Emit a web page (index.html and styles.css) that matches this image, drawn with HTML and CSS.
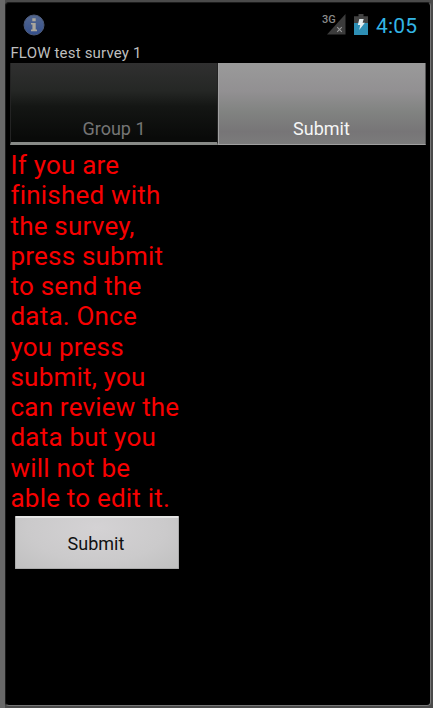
FILE: index.html
```
<!DOCTYPE html>
<html lang="en">
<head>
<meta charset="utf-8">
<title>FLOW test survey 1</title>
<link rel="stylesheet" href="styles.css">
</head>
<body>
<main class="screen">
  <header class="status">
    <svg class="info" width="22" height="22" viewBox="0 0 22 22">
      <defs><linearGradient id="blue" x1="0" y1="0" x2="0" y2="1"><stop offset="0" stop-color="#53678f"/><stop offset="1" stop-color="#344f8c"/></linearGradient></defs>
      <circle cx="11" cy="11" r="10" fill="url(#blue)" stroke="#4c5a78" stroke-width="1"/>
      <path d="M9.3 4.3h3.4v3H9.3zM8 9h4.700v6.600H14v1.600H8v-1.600h1.400v-5H8z" fill="#aaa69c"/>
    </svg>
    <div class="indicators">
      <span class="network">3G</span>
      <svg class="signal" width="19" height="21" viewBox="0 0 19 21">
        <path d="M18.500 0v20.500H0z" fill="#3c3c3c"/>
        <path d="M10.200 13.200l4.600 4.600M14.800 13.200l-4.600 4.600" stroke="#9a9a9a" stroke-width="1.1"/>
      </svg>
      <svg class="battery" width="14" height="21" viewBox="0 0 14 21">
        <path d="M4.500 0h5v2.300H14V10H0V2.300h4.500z" fill="#424242"/>
        <path d="M0 9h14v12H0z" fill="#2e8fb5"/>
        <path d="M5.300 5h4.400L8.600 8.800h2.300L5.200 16l1-5H3.800z" fill="#e4eef1"/>
      </svg>
      <time class="clock">4:05</time>
    </div>
  </header>
  <h1 class="title">FLOW test survey 1</h1>
  <nav class="tabs">
    <div class="tab tab-idle">Group 1</div>
    <div class="tab tab-active">Submit</div>
  </nav>
  <section class="content">
    <p class="message">If you are<br>finished with<br>the survey,<br>press submit<br>to send the<br>data. Once<br>you press<br>submit, you<br>can review the<br>data but you<br>will not be<br>able to edit it.</p>
    <button class="submit">Submit</button>
  </section>
</main>
</body>
</html>
```
FILE: styles.css
```
* { box-sizing: border-box; }
body {
  margin: 0;
  height: 708px;
  padding: 2px 2px 2px 5px;
  overflow: hidden;
  background: linear-gradient(90deg, #686868 0, #686868 5px, #4a4a4a 5px, #4a4a4a 100%);
  font-family: Roboto, sans-serif;
}
.screen {
  height: 704px;
  padding: 0 4px;
  background: #000;
  border: 1px solid #1c1c1c;
  border-right-color: #777;
  border-bottom-color: #777;
  border-radius: 4px;
}
.status {
  display: flex;
  justify-content: space-between;
  height: 40px;
  padding: 11px 8px 0 13px;
}
.indicators { display: flex; }
.network {
  width: 5px;
  margin-top: -1px;
  color: #8a8a8a;
  font: 500 11px/13px Roboto, sans-serif;
  white-space: nowrap;
}
.battery { margin-left: 8px; }
.clock {
  width: 42px;
  margin-left: 8px;
  color: #33b5e5;
  font-size: 21px;
  line-height: 24px;
  letter-spacing: .15px;
}
.title {
  height: 20px;
  margin: 0;
  padding-left: .4px;
  color: #bebebe;
  font-size: 15px;
  font-weight: 400;
  line-height: 20px;
  letter-spacing: .18px;
}
.tabs { display: flex; height: 82px; }
.tab {
  width: 208px;
  padding-top: 54px;
  font-size: 18px;
  line-height: 24px;
  text-align: center;
}
.tab-idle {
  height: 82px;
  color: #757575;
  background: linear-gradient(#303030, #252725 35%, #141614 55%, #090a09 95%);
  border: 1px solid #232323;
  border-top: 0;
  border-bottom: 3px solid #888a87;
}
.tab-active {
  padding-right: 1px;
  color: #f5f5f5;
  background: linear-gradient(#9a9a9a, #929092 35%, #818381 60%, #777577 85%, #7b7b7b);
  border: 1px solid #a0a0a0;
  border-top: 0;
  border-right-color: #555;
}
.content { padding-top: 5px; }
.message {
  margin: 0;
  padding-left: .5px;
  color: #f80000;
  font-size: 26px;
  line-height: 30.25px;
  letter-spacing: .2px;
  white-space: nowrap;
}
.submit {
  display: block;
  width: 164px;
  height: 53px;
  margin: 3px 0 0 5px;
  padding: 0 2px 0 0;
  color: #111;
  background: radial-gradient(ellipse at 50% 20%, #d4d2d4, #cbcacb 60%, #c0c0c0);
  border: 1px solid #aaa;
  border-top: 2px solid #e4e4e4;
  border-radius: 1px;
  font: 18px Roboto, sans-serif;
}
```
